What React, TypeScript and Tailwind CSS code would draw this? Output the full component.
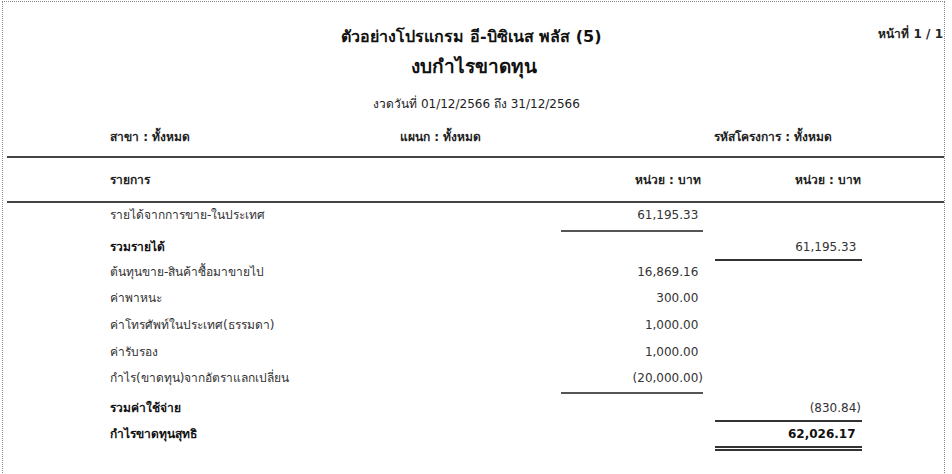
import React from "react";

const F = { fontFamily: "Tahoma, 'DejaVu Sans', 'Noto Sans', sans-serif" };

type Row = {
  label: string;
  bold?: boolean;
  c1?: string;
  c2?: string;
  h: string;
  line1?: string;
  line2?: string;
  dbl?: boolean;
};

const Num = ({ v, bold }: { v?: string; bold?: boolean }) => {
  if (!v) return null;
  const neg = v.startsWith("(");
  return (
    <span className={bold ? "font-bold text-[#111]" : "text-[#333]"}>
      {v}
      {!neg && <span className="invisible">)</span>}
    </span>
  );
};

export default function App() {
  const rows: Row[] = [
    { label: "รายได้จากการขาย-ในประเทศ", c1: "61,195.33", h: "h-[32px]", line1: "mb-[4px]" },
    { label: "รวมรายได้", bold: true, c2: "61,195.33", h: "h-[25px]", line2: "mb-[0px]" },
    { label: "ต้นทุนขาย-สินค้าซื้อมาขายไป", c1: "16,869.16", h: "h-[26px]" },
    { label: "ค่าพาหนะ", c1: "300.00", h: "h-[27px]" },
    { label: "ค่าโทรศัพท์ในประเทศ(ธรรมดา)", c1: "1,000.00", h: "h-[27px]" },
    { label: "ค่ารับรอง", c1: "1,000.00", h: "h-[26px]" },
    { label: "กำไร(ขาดทุน)จากอัตราแลกเปลี่ยน", c1: "(20,000.00)", h: "h-[30px]", line1: "mb-[3px]" },
    { label: "รวมค่าใช้จ่าย", bold: true, c2: "(830.84)", h: "h-[26px]", line2: "mb-[1px]" },
    { label: "กำไรขาดทุนสุทธิ", bold: true, c2: "62,026.17", h: "h-[30px]", dbl: true },
  ];

  return (
    <div className="w-[952px] h-[474px] bg-white overflow-hidden text-[#222]" style={F}>
      <div className="ml-[2px] mt-[1px] w-[943px] h-[480px] border-t border-l border-r border-dotted border-[#888]">
        {/* Header */}
        <div className="relative h-[154px]">
          <div className="absolute right-[1px] top-[23px] text-[12px] font-bold text-[#222]">หน้าที่ 1 / 1</div>
          <div className="pt-[23px] flex flex-col items-center">
            <div className="text-[16px] font-bold leading-[24px] text-[#111] pr-[4px]">ตัวอย่างโปรแกรม อี-บิซิเนส พลัส (5)</div>
            <div className="mt-[4px] text-[19px] font-bold leading-[26px] text-[#111]">งบกำไรขาดทุน</div>
            <div className="mt-[16px] text-[12px] leading-[18px] text-[#222] pl-[6px]">งวดวันที่ 01/12/2566 ถึง 31/12/2566</div>
          </div>
          <div className="mt-[15px] flex text-[12px] leading-[18px] font-semibold text-[#222]">
            <div className="w-[397px] pl-[107px]">สาขา : ทั้งหมด</div>
            <div className="w-[314px]">แผนก : ทั้งหมด</div>
            <div>รหัสโครงการ : ทั้งหมด</div>
          </div>
        </div>
        <div className="ml-[4px] h-[2px] bg-[#444]" />
        {/* Column header */}
        <div className="flex items-center h-[43px] text-[12px] font-bold text-[#222]">
          <div className="w-[558px] pl-[107px]">รายการ</div>
          <div className="w-[142px] text-right pr-[2px]">หน่วย : บาท</div>
          <div className="w-[12px]" />
          <div className="w-[147px] text-right pr-[1px]">หน่วย : บาท</div>
        </div>
        <div className="ml-[4px] h-[2px] bg-[#444]" />
        {/* Body */}
        <div className="pt-[1px] text-[12px]">
          {rows.map((r, i) => (
            <div key={i} className={`flex ${r.h}`}>
              <div className={`w-[558px] pl-[107px] pt-[2px] leading-[18px] ${r.bold ? "font-bold text-[#111]" : "text-[#333]"}`}>
                {r.label}
              </div>
              <div className="w-[142px] flex flex-col justify-between">
                <div className="text-right pt-[2px] leading-[18px]">
                  <Num v={r.c1} />
                </div>
                {r.line1 ? <div className={`h-[2px] bg-[#555] ${r.line1}`} /> : null}
              </div>
              <div className="w-[12px]" />
              <div className="w-[147px] flex flex-col">
                <div className="text-right pt-[2px] leading-[18px] pr-[1px]">
                  <Num v={r.c2} bold={r.label === "กำไรขาดทุนสุทธิ"} />
                </div>
                {r.line2 ? (
                  <div className={`mt-auto h-[2px] bg-[#333] ${r.line2}`} />
                ) : null}
                {r.dbl ? (
                  <div className="mt-[3px] flex flex-col gap-[1px]">
                    <div className="h-[2px] bg-[#333]" />
                    <div className="h-[2px] bg-[#333]" />
                  </div>
                ) : null}
              </div>
            </div>
          ))}
        </div>
      </div>
    </div>
  );
}
